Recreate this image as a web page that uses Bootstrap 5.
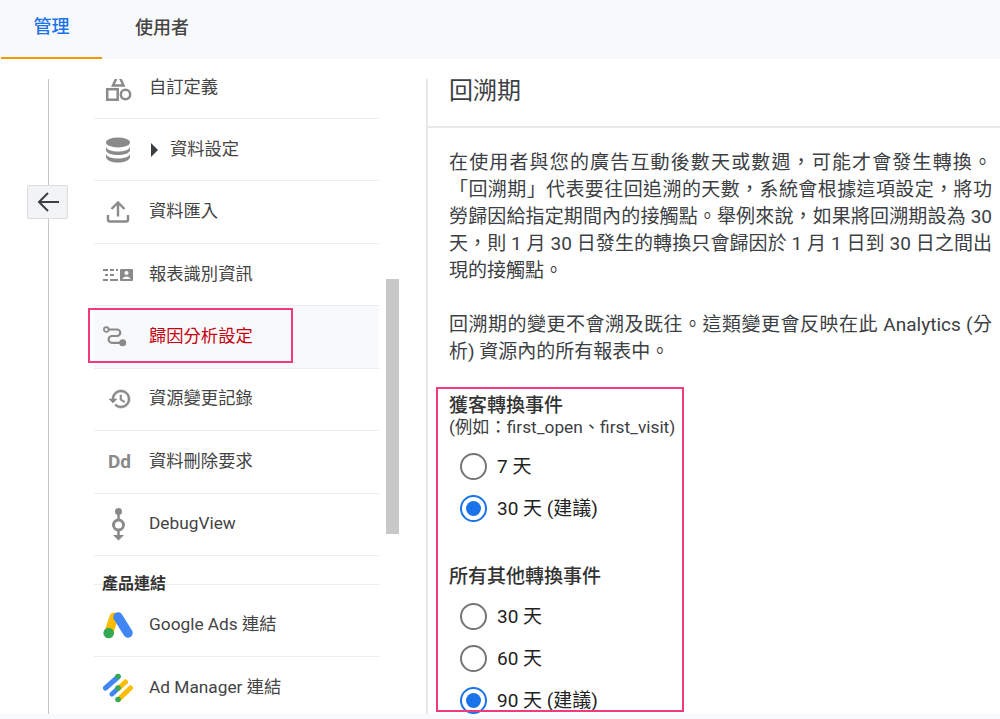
<!DOCTYPE html>
<html lang="zh-Hant"><head><meta charset="utf-8">
<link href="https://cdn.jsdelivr.net/npm/bootstrap@5.3.0/dist/css/bootstrap.min.css" rel="stylesheet">
<style>
html,body{height:719px;overflow:hidden}
body{background:#f8f9fa;font-family:Roboto,"Noto Sans CJK TC",sans-serif;color:#3c4043;position:relative}
.topbar{height:59px;background:#f8f9fa}
.tabitem{height:59px;font-size:18px;font-weight:500;color:#444;padding-bottom:4px}
.tabitem.on{width:101px;margin-left:1px;color:#1a73e8;border-bottom:2px solid #f29900}
.tabitem.off{width:120px}
.stage{height:655px;background:#fff;overflow:hidden;padding-top:20px}
.railbox{width:94px;position:relative}
.railline{width:1px;background:#c4c4c4;height:100%;margin-left:48px}
.backbtn{position:absolute;left:27px;top:106px;width:41px;height:34px;background:#f1f3f4;border:1px solid #dadce0;border-radius:2px}
.menubox{width:285px;flex:none}
.rowitem{height:62.43px;border-bottom:1px solid #ebedef;font-size:17.3px;color:#444;white-space:nowrap}
.rowitem.first{height:40px;line-height:16px}
.rowitem.sel{background:#f8f9fa;color:#c5000f}
.rowitem.linkrow{height:72px;padding-top:9px}
.icobox{width:55px;padding-left:9px;flex:none;display:flex;align-items:center}
.caretico{margin:0 12px 0 2px;flex:none}
.ddmark{font-size:19px;font-weight:700;color:#8a8a8a;margin-left:5px}
.grouphead{height:29px;border-bottom:1px solid #ebedef;font-size:16px;font-weight:700;color:#333;padding-left:8px;line-height:56px;white-space:nowrap}
.scrolltrack{width:48px;position:relative;flex:none}
.scrollthumb{position:absolute;left:7px;top:200px;width:13px;height:255px;background:#c8c8c8}
.panel{flex:1;border-left:2px solid #e8e8e8;min-width:0;margin-left:-1px}
.paneltitle{height:49px;border-bottom:2px solid #e8e8e8;font-size:24px;padding-left:21px;line-height:24px;color:#3c4043}
.panelbody{padding:21px 0 0 21px;font-size:19px;line-height:27px;color:#3c4043}
.panelbody p{margin:0 0 27px;width:543px;text-align:justify;text-spacing-trim:space-all}
.panelbody p.lastpara{margin-bottom:30px}
.optlabel{font-weight:500;color:#333;line-height:21px}
.optlabel.nextgroup{margin-top:37px;margin-bottom:8px}
.optsub{font-size:17.3px;line-height:22px;margin-bottom:7px;white-space:nowrap}
.optrow{height:42px;padding-left:11px;color:#222;gap:10px}
.ring{width:27px;height:27px;border-radius:50%;border:2px solid #757575;flex:none;display:block}
.ring.on{border-color:#1a73e8;position:relative}
.ring.on::after{content:"";position:absolute;inset:4px;border-radius:50%;background:#1a73e8}
.pinkbox{position:absolute;border:2px solid #f1397e;pointer-events:none}
.pinkone{left:88px;top:308px;width:205px;height:55px}
.pinktwo{left:436px;top:387px;width:248px;height:325px}
</style></head><body>
<div class="topbar d-flex">
<div class="tabitem on d-flex align-items-center justify-content-center">管理</div>
<div class="tabitem off d-flex align-items-center justify-content-center">使用者</div>
</div>
<div class="stage d-flex">
<div class="railbox"><div class="railline"></div>
<div class="backbtn d-flex align-items-center justify-content-center"><svg width="24" height="24" viewBox="0 0 24 24"><path d="M23 12H3M12 3 3 12l9 9" fill="none" stroke="#3c4043" stroke-width="2"/></svg></div></div>
<div class="menubox">
<div class="rowitem first d-flex"><div class="icobox align-items-start"><svg width="30" height="22" viewBox="0 0 30 22"><path d="M13.500-1 10 6.500H20.500L17-1" fill="none" stroke="#8a8a8a" stroke-width="2.500"/><rect x="4.200" y="10.200" width="10.500" height="10.500" fill="none" stroke="#8a8a8a" stroke-width="2.500"/><circle cx="22.500" cy="15.500" r="4.700" fill="none" stroke="#8a8a8a" stroke-width="2.500"/></svg></div><span>自訂定義</span></div>
<div class="rowitem d-flex align-items-center"><div class="icobox"><svg width="30" height="26" viewBox="0 0 30 26"><ellipse cx="15" cy="5.500" rx="12" ry="5" fill="#8a8a8a"/><path d="M3 10c1 3 6 4.500 12 4.500S26 13 27 10v3.500c-1 3-6 4.500-12 4.500S4 16.500 3 13.500z" fill="#8a8a8a"/><path d="M3 17c1 3 6 4.500 12 4.500S26 20 27 17v3.500c-1 3-6 5-12 5S4 23.500 3 20.500z" fill="#8a8a8a"/></svg></div><svg class="caretico" width="7" height="14" viewBox="0 0 7 14"><path d="M0 0l7 7-7 7z" fill="#3c4043"/></svg><span>資料設定</span></div>
<div class="rowitem d-flex align-items-center"><div class="icobox"><svg width="30" height="22" viewBox="0 0 30 22"><path d="M15 15.500V2M8.500 8 15 1.500 21.500 8M5 14v4.500a2 2 0 0 0 2 2h16a2 2 0 0 0 2-2V14" fill="none" stroke="#8a8a8a" stroke-width="2.400"/></svg></div><span>資料匯入</span></div>
<div class="rowitem d-flex align-items-center"><div class="icobox"><svg width="30" height="14" viewBox="0 0 30 14"><path d="M0 2h5M7 2h4M13 2h2M2 7h3M7 7h4M0 12h5M7 12h8" stroke="#8a8a8a" stroke-width="2" fill="none"/><rect x="17" y="1" width="13" height="12" rx="1" fill="#8a8a8a"/><circle cx="23.500" cy="5" r="2" fill="#fff"/><path d="M19.500 11c.4-1.800 2-2.600 4-2.600s3.600.8 4 2.600z" fill="#fff"/></svg></div><span>報表識別資訊</span></div>
<div class="rowitem sel d-flex align-items-center"><div class="icobox"><svg width="30" height="21" viewBox="0 0 30 21"><circle cx="3.300" cy="3.500" r="2.400" fill="none" stroke="#8a8a8a" stroke-width="1.800"/><path d="M6 3.500h8a3 3 0 0 1 0 6.500H9a3.300 3.300 0 0 0 0 6.800h8" fill="none" stroke="#8a8a8a" stroke-width="2.200"/><circle cx="19.700" cy="16.800" r="3.500" fill="#8a8a8a"/></svg></div><span>歸因分析設定</span></div>
<div class="rowitem d-flex align-items-center"><div class="icobox"><svg width="30" height="24" viewBox="-5 0 30 24"><path d="M13 3c-4.970 0-9 4.030-9 9H1l3.890 3.890.07.140L9 12H6c0-3.870 3.130-7 7-7s7 3.130 7 7-3.130 7-7 7c-1.930 0-3.680-.79-4.940-2.060l-1.420 1.420C8.270 19.990 10.510 21 13 21c4.970 0 9-4.030 9-9s-4.030-9-9-9zm-1 5v5l4.280 2.540.72-1.210-3.500-2.080V8H12z" fill="#8a8a8a" stroke="#8a8a8a" stroke-width=".6"/></svg></div><span>資源變更記錄</span></div>
<div class="rowitem d-flex align-items-center"><div class="icobox"><span class="ddmark">Dd</span></div><span>資料刪除要求</span></div>
<div class="rowitem d-flex align-items-center"><div class="icobox"><svg width="30" height="33" viewBox="0 0 30 33"><circle cx="15.500" cy="3.500" r="3.500" fill="#8a8a8a"/><path d="M15.500 6v6M15.500 22v6" stroke="#8a8a8a" stroke-width="2.500"/><circle cx="15.500" cy="17" r="5" fill="none" stroke="#8a8a8a" stroke-width="3"/><path d="M10 27h11l-5.500 5.500z" fill="#8a8a8a"/></svg></div><span>DebugView</span></div>
<div class="grouphead">產品連結</div>
<div class="rowitem linkrow d-flex align-items-center"><div class="icobox"><svg width="30" height="28" viewBox="0 0 30 28"><path d="M11 6 5.700 22" stroke="#fbbc04" stroke-width="9" stroke-linecap="round"/><path d="M15 6 25 22" stroke="#4285f4" stroke-width="9.500" stroke-linecap="round"/><circle cx="5.700" cy="22" r="5.300" fill="#34a853"/></svg></div><span>Google Ads 連結</span></div>
<div class="rowitem d-flex align-items-center"><div class="icobox"><svg width="30" height="30" viewBox="0 0 30 30"><path d="M2.500 15 15 4M9 21 15 15.500" stroke="#4285f4" stroke-width="5" stroke-linecap="round"/><path d="M16 15 22.500 9M16 26 27.500 15" stroke="#fbbc04" stroke-width="5" stroke-linecap="round"/><circle cx="15" cy="3.500" r="2.800" fill="#34a853"/><circle cx="15" cy="15" r="2.800" fill="#34a853"/><circle cx="15" cy="26.500" r="2.800" fill="#34a853"/></svg></div><span>Ad Manager 連結</span></div>
</div>
<div class="scrolltrack"><div class="scrollthumb"></div></div>
<div class="panel">
<div class="paneltitle">回溯期</div>
<div class="panelbody">
<p>在使用者與您的廣告互動後數天或數週，可能才會發生轉換。「回溯期」代表要往回追溯的天數，系統會根據這項設定，將功勞歸因給指定期間內的接觸點。舉例來說，如果將回溯期設為 30 天，則 1 月 30 日發生的轉換只會歸因於 1 月 1 日到 30 日之間出現的接觸點。</p>
<p class="lastpara">回溯期的變更不會溯及既往。這類變更會反映在此 Analytics (分析) 資源內的所有報表中。</p>
<div class="optlabel">獲客轉換事件</div>
<div class="optsub">(例如：first_open、first_visit)</div>
<div class="optrow d-flex align-items-center"><span class="ring"></span>7 天</div>
<div class="optrow d-flex align-items-center"><span class="ring on"></span>30 天 (建議)</div>
<div class="optlabel nextgroup">所有其他轉換事件</div>
<div class="optrow d-flex align-items-center"><span class="ring"></span>30 天</div>
<div class="optrow d-flex align-items-center"><span class="ring"></span>60 天</div>
<div class="optrow d-flex align-items-center"><span class="ring on"></span>90 天 (建議)</div>
</div>
</div>
</div>
<div class="pinkbox pinkone"></div>
<div class="pinkbox pinktwo"></div>
</body></html>
